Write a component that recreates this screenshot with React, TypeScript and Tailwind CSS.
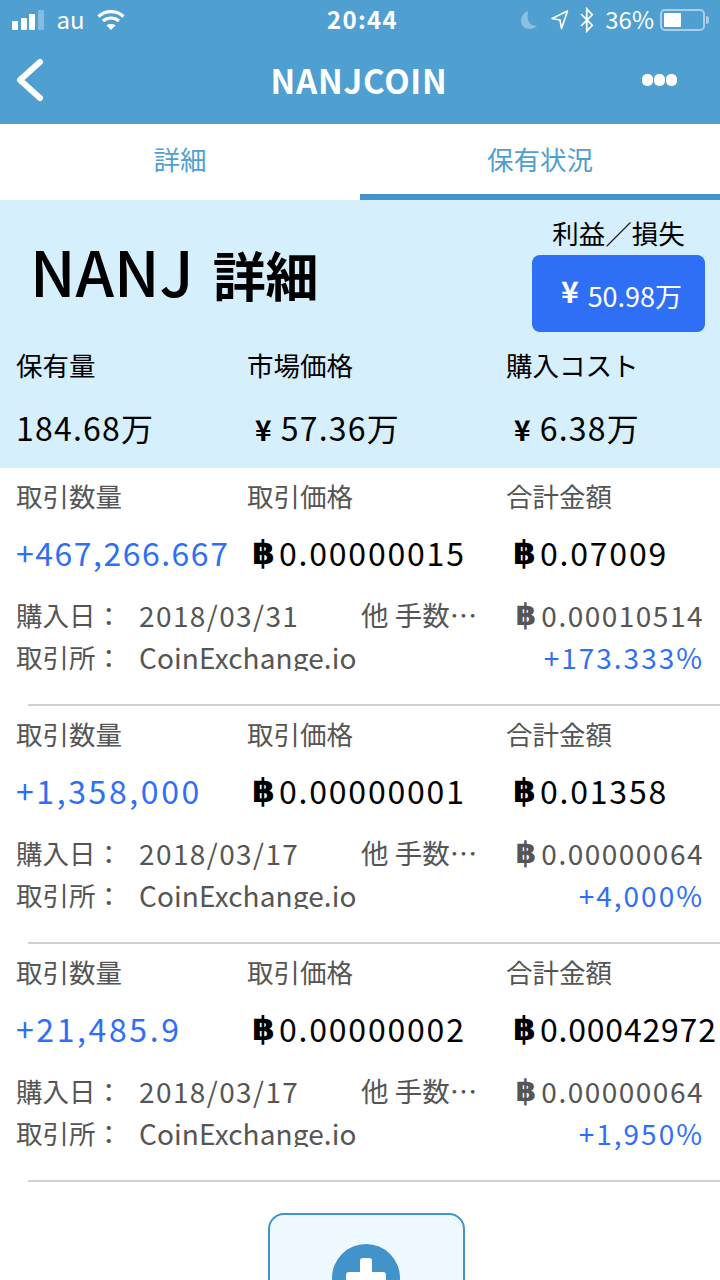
import React from 'react';

const font = "font-['Noto_Sans_CJK_JP','Noto_Sans',sans-serif]";

const trades = [
  { qty: '+467,266.667', qtyTrack: 'tracking-[1.500px]', price: '0.00000015', total: '0.07009', totalTrack: 'tracking-[1.800px]', date: '2018/03/31', fee: '0.00010514', pct: '+173.333%' },
  { qty: '+1,358,000', qtyTrack: 'tracking-[2.600px]', price: '0.00000001', total: '0.01358', totalTrack: 'tracking-[1.800px]', date: '2018/03/17', fee: '0.00000064', pct: '+4,000%' },
  { qty: '+21,485.9', qtyTrack: 'tracking-[2.600px]', price: '0.00000002', total: '0.00042972', totalTrack: 'tracking-[0.800px]', date: '2018/03/17', fee: '0.00000064', pct: '+1,950%' },
];

const StatusBar = () => (
  <div className="h-10 grid grid-cols-[1fr_auto_1fr] items-center pl-3 pr-[11px] text-white">
    <div className="flex items-center">
      <div className="flex items-end gap-[2.500px] h-5">
        <div className="w-[6px] h-[9px] bg-white rounded-[1px]" />
        <div className="w-[6px] h-[12px] bg-white rounded-[1px]" />
        <div className="w-[6px] h-[16px] bg-white rounded-[1px]" />
        <div className="w-[6px] h-[20px] bg-white/30 rounded-[1px]" />
      </div>
      <span className="ml-[13px] text-[24px] leading-none pb-[3px]">au</span>
      <svg className="ml-[12px]" width="28" height="22" viewBox="0 0 28 22" fill="none" stroke="white" strokeWidth="3.2">
        <path d="M1.500 7.500C8.500 1 19.500 1 26.500 7.500" />
        <path d="M6 12C10.500 8 17.500 8 22 12" />
        <path d="M14 21L9.500 16.500C12 14.600 16 14.600 18.500 16.500Z" fill="white" stroke="none" />
      </svg>
    </div>
    <span className="ml-1 text-[24px] font-bold leading-none tracking-[1.300px] pb-[3px]">20:44</span>
    <div className="flex items-center justify-end">
      <svg width="18" height="20" viewBox="0 0 18 20" fill="white" fillOpacity="0.35">
        <path d="M8 1C3.500 3 1 6.500 1 10.500C1 15.500 5 19 10 19C13 19 15.500 17.500 17 15.500C11 16.500 6 12 8 1Z" />
      </svg>
      <svg className="ml-[12px]" width="19" height="20" viewBox="0 0 18 20" fill="none" stroke="white" strokeWidth="1.6">
        <path d="M17 1L1.500 8.500L9.500 10L11 18.500Z" strokeLinejoin="round" />
      </svg>
      <svg className="ml-[11px]" width="14" height="26" viewBox="0 0 12 22" fill="none" stroke="white" strokeWidth="1.5">
        <path d="M1 6L10.500 15.500L5.800 20.500V1.500L10.500 6.500L1 16" />
      </svg>
      <span className="ml-[11px] text-[24px] leading-none pb-[3px]">36%</span>
      <div className="ml-[6px] w-[45px] h-[22px] border-2 border-white/50 rounded-[5px] p-[2px]">
        <div className="w-[17px] h-full bg-white rounded-[1px]" />
      </div>
      <div className="ml-[1px] w-[3px] h-[8px] bg-white/50 rounded-r-sm" />
    </div>
  </div>
);

const Baht = ({ className }: { className: string }) => (
  <span className={`font-['DejaVu_Sans',sans-serif] font-bold ${className}`}>฿</span>
);

const TradeRow = ({ t }: { t: (typeof trades)[number] }) => (
  <div className="h-[238px] flex flex-col">
    <div className="grid grid-cols-[231px_259px_1fr] pl-4 h-[56px] items-center text-[26.500px] text-[#555] leading-none">
      <span>取引数量</span>
      <span>取引価格</span>
      <span>合計金額</span>
    </div>
    <div className="grid grid-cols-[231px_259px_1fr] pl-4 h-[56px] items-center text-[32px] tracking-[1.800px] leading-none whitespace-nowrap">
      <span className={`text-[#2f6ff6] ${t.qtyTrack}`}>{t.qty}</span>
      <span className="pl-[5px] text-black flex items-center gap-[4px]"><Baht className="text-[33px] tracking-normal" />{t.price}</span>
      <span className={`pl-[7px] text-black flex items-center gap-[4px] ${t.totalTrack}`}><Baht className="text-[33px] tracking-normal" />{t.total}</span>
    </div>
    <div className="flex pl-4 pr-4 mt-[14px] h-[42px] items-center text-[26.500px] text-[#555] leading-none whitespace-nowrap">
      <span className="w-[123px]">購入日：</span>
      <span className="w-[222px] text-[28px] tracking-[1.400px]">{t.date}</span>
      <span className="text-[27.500px]">他 手数…</span>
      <span className="flex-1 flex items-center justify-end gap-[5px] text-[28px] tracking-[1.500px]"><Baht className="text-[30px] tracking-normal" />{t.fee}</span>
    </div>
    <div className="flex pl-4 pr-4 h-[42px] items-center text-[26.500px] text-[#555] leading-none whitespace-nowrap">
      <span className="w-[123px]">取引所：</span>
      <span className="h-[28px] overflow-hidden leading-[28px] text-[28px] tracking-[0.100px]">CoinExchange.io</span>
      <span className="ml-auto text-[#2f6ff6] text-[28px] tracking-[2px]">{t.pct}</span>
    </div>
    <div className="mt-auto ml-7 h-[2px] bg-[#d0d0d0]" />
  </div>
);

const App = () => (
  <div className={`w-[720px] h-[1280px] overflow-hidden bg-white ${font}`}>
    <div className="h-[124px] bg-[#4f9fd1]">
      <StatusBar />
      <div className="h-[84px] flex items-center justify-between pl-[16px] pr-[43px] text-white pb-[4px]">
        <svg width="28" height="44" viewBox="0 0 28 44" fill="none" stroke="white" strokeWidth="6" strokeLinecap="round" strokeLinejoin="round">
          <path d="M24 4L4 22L24 40" />
        </svg>
        <span className="ml-[32px] text-[33px] font-bold tracking-[0.800px] leading-none">NANJCOIN</span>
        <div className="flex gap-[1px]">
          <div className="w-[11px] h-[12px] bg-white rounded-[5px]" />
          <div className="w-[11px] h-[12px] bg-white rounded-[5px]" />
          <div className="w-[11px] h-[12px] bg-white rounded-[5px]" />
        </div>
      </div>
    </div>

    <div className="h-[76px] grid grid-cols-2 text-[26.500px] text-[#4f9fd1] leading-none">
      <div className="flex items-center justify-center pb-[6px]">詳細</div>
      <div className="flex items-center justify-center border-b-[6px] border-[#4293c9]">保有状況</div>
    </div>

    <div className="h-[268px] bg-[#d6effc] flex flex-col text-black">
      <div className="h-[140px] flex justify-between pl-[30px] pr-[15px]">
        <h1 className="font-medium leading-none mt-[39px] flex items-baseline gap-[19px]">
          <span className="text-[62px]">NANJ</span>
          <span className="text-[53px] font-bold">詳細</span>
        </h1>
        <div className="flex flex-col items-center">
          <span className="text-[26.500px] leading-none h-[55px] pt-[20px]">利益／損失</span>
          <div className="w-[173px] h-[77px] bg-[#2f6ff6] rounded-lg flex items-center justify-center gap-[9px] pl-[6px] text-white text-[27px] leading-none">
            <span className="font-bold text-[30px] pb-[8px]">¥</span>
            <span className="pt-[4px]">50.98万</span>
          </div>
        </div>
      </div>
      <div className="grid grid-cols-[231px_259px_1fr] pl-4 h-[50px] items-center text-[26.500px] leading-none">
        <span>保有量</span>
        <span>市場価格</span>
        <span>購入コスト</span>
      </div>
      <div className="grid grid-cols-[231px_259px_1fr] pl-4 h-[74px] items-center text-[32px] tracking-[1.200px] leading-none whitespace-nowrap">
        <span>184.68万</span>
        <span className="pl-[8px]"><span className="font-bold mr-[8px] text-[28px]">¥</span>57.36万</span>
        <span className="pl-[8px]"><span className="font-bold mr-[8px] text-[28px]">¥</span>6.38万</span>
      </div>
    </div>

    {trades.map((t, i) => (
      <TradeRow key={i} t={t} />
    ))}

    <div className="flex justify-center pt-[31px] pl-3">
      <div className="w-[197px] h-[120px] bg-[#eef9ff] border-2 border-[#4293c9] rounded-[16px] flex justify-center pt-[29px]">
        <svg width="68" height="68" viewBox="0 0 68 68">
          <circle cx="34" cy="34" r="34" fill="#4293c9" />
          <path d="M28 17a3 3 0 0 1 3-3h6a3 3 0 0 1 3 3v11h11a3 3 0 0 1 3 3v6a3 3 0 0 1-3 3H40v11a3 3 0 0 1-3 3h-6a3 3 0 0 1-3-3V40H17a3 3 0 0 1-3-3v-6a3 3 0 0 1 3-3h11Z" fill="white" />
        </svg>
      </div>
    </div>
  </div>
);

export default App;
